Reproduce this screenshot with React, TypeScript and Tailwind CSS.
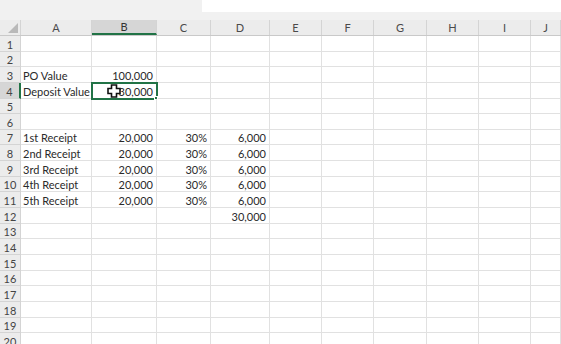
import React from "react";

const cols = ["A", "B", "C", "D", "E", "F", "G", "H", "I", "J"];

type Row = { a?: string; b?: string; c?: string; d?: string };

const data: Record<number, Row> = {
  3: { a: "PO Value", b: "100,000" },
  4: { a: "Deposit Value", b: "30,000" },
  7: { a: "1st Receipt", b: "20,000", c: "30%", d: "6,000" },
  8: { a: "2nd Receipt", b: "20,000", c: "30%", d: "6,000" },
  9: { a: "3rd Receipt", b: "20,000", c: "30%", d: "6,000" },
  10: { a: "4th Receipt", b: "20,000", c: "30%", d: "6,000" },
  11: { a: "5th Receipt", b: "20,000", c: "30%", d: "6,000" },
  12: { d: "30,000" },
};

const rows = Array.from({ length: 20 }, (_, i) => i + 1);

const gridCols =
  "grid grid-cols-[21px_71px_65px_54px_59px_52px_52px_53px_52px_52px_1fr]";

const Cursor = () => (
  <svg
    width="14"
    height="14"
    viewBox="0 0 14 14"
    className="absolute left-[15px] top-[1px]"
  >
    <path
      d="M4.5 1 H9.5 V4.5 H13 V9.5 H9.5 V13 H4.5 V9.5 H1 V4.5 H4.5 Z"
      fill="#fff"
      stroke="#111"
      strokeWidth="1.6"
    />
  </svg>
);

const App = () => {
  return (
    <div className="w-[561px] h-[344px] overflow-hidden bg-white font-['Lato','Liberation_Sans',sans-serif] text-[11px] text-[#2a2a2a]">
      {/* strip above the sheet */}
      <div className="h-[20px] bg-[#f1f1f1] flex">
        <div className="w-[202px]" />
        <div className="flex-1 h-[12px] bg-white" />
      </div>

      {/* column headers */}
      <div className={`${gridCols} h-[16px] bg-[#ececec] border-b border-[#c9c9c9] text-[#4a4a4a]`}>
        <div className="relative border-r border-[#d4d4d4]">
          <div className="absolute right-[2px] bottom-[2px] w-0 h-0 border-l-[10px] border-l-transparent border-b-[10px] border-b-[#b9b9b9]" />
        </div>
        {cols.map((c) => (
          <div
            key={c}
            className={`flex items-center justify-center border-r border-[#d4d4d4] leading-none ${
              c === "B" ? "bg-[#d6d6d6] border-b-2 border-b-[#217346] text-[#333]" : ""
            }`}
          >
            {c}
          </div>
        ))}
      </div>

      {/* rows */}
      {rows.map((r) => {
        const d = data[r] || {};
        return (
          <div key={r} className={`${gridCols} h-[15.65px]`}>
            <div
              className={`flex items-end justify-center pb-[1px] leading-none text-[#444] border-r border-b border-[#d4d4d4] ${
                r === 4 ? "bg-[#d6d6d6] border-r-2 border-r-[#217346]" : "bg-[#ececec]"
              }`}
            >
              {r}
            </div>
            <div className="flex items-end px-[2px] pb-[1px] leading-none whitespace-nowrap border-r border-b border-[#e1e1e1]">
              {d.a}
            </div>
            <div
              className={`relative flex items-end justify-end pl-[2px] pr-[3px] pb-[1px] leading-none border-r border-b border-[#e1e1e1] ${
                r === 4 ? "outline-2 outline-[#217346] -outline-offset-1" : ""
              }`}
            >
              {d.b}
              {r === 4 && (
                <>
                  <Cursor />
                  <div className="absolute right-[-2px] bottom-[-2px] w-[4px] h-[4px] bg-[#217346] border border-white" />
                </>
              )}
            </div>
            <div className="flex items-end justify-end pl-[2px] pr-[3px] pb-[1px] leading-none border-r border-b border-[#e1e1e1]">
              {d.c}
            </div>
            <div className="flex items-end justify-end pl-[2px] pr-[3px] pb-[1px] leading-none border-r border-b border-[#e1e1e1]">
              {d.d}
            </div>
            {cols.slice(4).map((c) => (
              <div key={c} className="border-r border-b border-[#e1e1e1]" />
            ))}
          </div>
        );
      })}
    </div>
  );
};

export default App;
